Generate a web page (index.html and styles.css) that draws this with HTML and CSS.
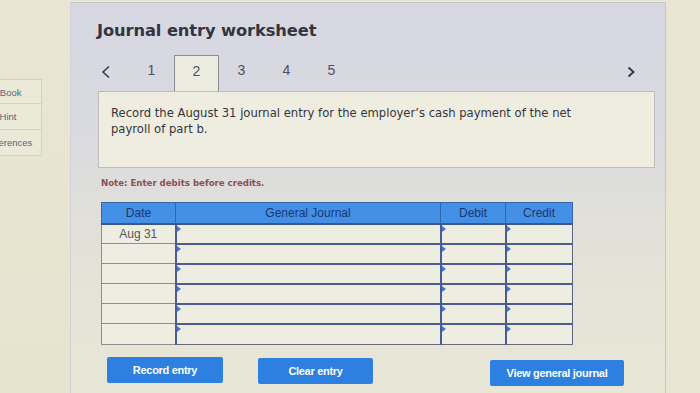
FILE: index.html
```html
<!DOCTYPE html>
<html lang="en">
<head>
<meta charset="utf-8">
<title>Journal entry worksheet</title>
<link rel="stylesheet" href="styles.css">
</head>
<body>
<div class="screen">
  <aside class="side">
    <div class="side-item">eBook</div>
    <div class="side-item">Hint</div>
    <div class="side-item">References</div>
  </aside>
  <main class="panel">
    <h1 class="title">Journal entry worksheet</h1>
    <nav class="pager">
      <span class="arrow"><svg width="10" height="14" viewBox="0 0 10 14"><polyline points="8,1.5 2,7 8,12.5" fill="none" stroke="#3a3a44" stroke-width="1.6"/></svg></span>
      <span class="num first">1</span>
      <span class="num active">2</span>
      <span class="num">3</span>
      <span class="num">4</span>
      <span class="num">5</span>
      <span class="arrow next"><svg width="10" height="14" viewBox="0 0 10 14"><polyline points="2.5,2.5 7.5,7 2.5,11.5" fill="none" stroke="#3a3a44" stroke-width="2"/></svg></span>
    </nav>
    <div class="prompt">Record the August 31 journal entry for the employer’s cash payment of the net payroll of part b.</div>
    <p class="note">Note: Enter debits before credits.</p>
    <table class="journal">
      <thead>
        <tr><th class="c-date">Date</th><th class="c-gj">General Journal</th><th class="c-dr">Debit</th><th class="c-cr">Credit</th></tr>
      </thead>
      <tbody>
        <tr><td class="date">Aug 31</td><td class="in"></td><td class="in"></td><td class="in"></td></tr>
        <tr><td class="date"></td><td class="in"></td><td class="in"></td><td class="in"></td></tr>
        <tr><td class="date"></td><td class="in"></td><td class="in"></td><td class="in"></td></tr>
        <tr><td class="date"></td><td class="in"></td><td class="in"></td><td class="in"></td></tr>
        <tr><td class="date"></td><td class="in"></td><td class="in"></td><td class="in"></td></tr>
        <tr class="last"><td class="date"></td><td class="in"></td><td class="in"></td><td class="in"></td></tr>
      </tbody>
    </table>
    <div class="actions">
      <button class="btn b-record">Record entry</button>
      <button class="btn b-clear">Clear entry</button>
      <button class="btn b-view">View general journal</button>
    </div>
  </main>
  <div class="edge"></div>
</div>
</body>
</html>
```
FILE: styles.css
```css
* { box-sizing: border-box; }
html, body { margin: 0; padding: 0; }
body {
  width: 700px;
  height: 393px;
  overflow: hidden;
  background: #e8e5d3;
  font-family: "DejaVu Sans", Verdana, sans-serif;
}
.screen {
  display: flex;
  width: 700px;
  height: 393px;
}
.side {
  width: 70px;
  flex: none;
  overflow: hidden;
  background: linear-gradient(#e9e7d4, #e6e3cf);
  padding-top: 79px;
}
.side-item {
  width: 68px;
  margin-left: -26px;
  height: 26px;
  line-height: 25px;
  border: 1px solid #d5d3c1;
  border-top: none;
  background: #ebe9d8;
  color: #5c6478;
  font-family: "Liberation Sans", Arial, sans-serif;
  font-size: 9.5px;
  text-align: center;
  white-space: nowrap;
}
.side-item:first-child { border-top: 1px solid #d5d3c1; height: 25px; }
.panel {
  width: 596px;
  flex: none;
  margin-top: 2px;
  border-top: 1px solid #c4c4cc;
  border-right: 1px solid #c6c5c6;
  border-left: 1px solid #d2d2da;
  background: linear-gradient(#d7d7e1 0px, #d9d9e1 120px, #e1e0d9 220px, #e6e4d7 300px, #e8e6d5 391px);
  padding: 0 10px 0 27px;
  display: flex;
  flex-direction: column;
}
.title {
  margin: 17px 0 0 -1px;
  font-size: 16.3px;
  line-height: 22px;
  font-weight: bold;
  color: #34343e;
  letter-spacing: -0.1px;
}
.pager {
  display: flex;
  align-items: center;
  height: 36px;
  margin-top: 13px;
  margin-left: -1px;
}
.arrow {
  width: 17px;
  height: 36px;
  display: flex;
  align-items: center;
  justify-content: center;
}
.arrow svg { display: block; margin-top: -3px; }
.arrow.next { margin-left: auto; margin-right: 16px; }
.num {
  width: 45px;
  height: 36px;
  display: flex;
  align-items: center;
  justify-content: center;
  font-family: "Liberation Sans", Arial, sans-serif;
  font-size: 14px;
  color: #50505a;
  padding-bottom: 6px;
}
.num.first { margin-left: 15px; }
.num.active {
  border: 1px solid #8c8c90;
  border-bottom: none;
  background: #ecebe0;
}
.prompt {
  height: 77px;
  background: #eeede0;
  border: 1px solid #bdbdbd;
  padding: 13px 40px 0 12px;
  font-size: 11.6px;
  line-height: 16px;
  color: #35353d;
}
.note {
  margin: 9px 0 0 3px;
  font-size: 8.6px;
  line-height: 12px;
  font-weight: bold;
  color: #8a5058;
}
.journal {
  margin: 13px 0 0 3px;
  width: 471px;
  border-collapse: collapse;
  table-layout: fixed;
  font-family: "Liberation Sans", Arial, sans-serif;
}
.c-date { width: 74px; }
.c-gj { width: 265px; }
.c-dr { width: 65px; }
.c-cr { width: 67px; }
.journal th {
  height: 21px;
  background: #4390e6;
  color: #1b376e;
  font-weight: normal;
  font-size: 12px;
  padding: 0;
  border: 1px solid #3466a8;
  border-bottom: 2px solid #3d5690;
}
.journal td {
  height: 20px;
  padding: 0;
  background: #eeede2;
}
.journal td.date {
  border: 1px solid #8e8e8c;
  border-top: none;
  text-align: center;
  font-size: 12px;
  color: #555560;
}
.journal td.in {
  position: relative;
  border-left: 2px solid #4a5b96;
  border-bottom: 2px solid #4a5b96;
  border-right: 1px solid #5a6680;
}
.journal td.in::before {
  content: "";
  position: absolute;
  left: 0;
  top: 1px;
  border-left: 4px solid #3f74d6;
  border-top: 3px solid transparent;
  border-bottom: 3px solid transparent;
}
.journal tr.last td { height: 21px; }
.journal tr.last td.in { border-bottom: 1px solid #6a6a7a; }
.journal tr.last td.date { border-bottom: 1px solid #8e8e8c; }
.actions {
  display: flex;
  align-items: flex-start;
  margin-top: 12px;
}
.btn {
  height: 26px;
  border: none;
  border-radius: 2px;
  background: #2d7fe0;
  color: #ffffff;
  font-family: "Liberation Sans", Arial, sans-serif;
  font-weight: bold;
  font-size: 11px;
  letter-spacing: -0.3px;
  padding: 0;
}
.b-record { width: 116px; margin-left: 9px; }
.b-clear { width: 115px; margin-left: 35px; margin-top: 1px; }
.b-view { width: 134px; margin-left: 117px; margin-top: 3px; }
.edge {
  flex: 1;
  background: #e9e5d3;
}
```
